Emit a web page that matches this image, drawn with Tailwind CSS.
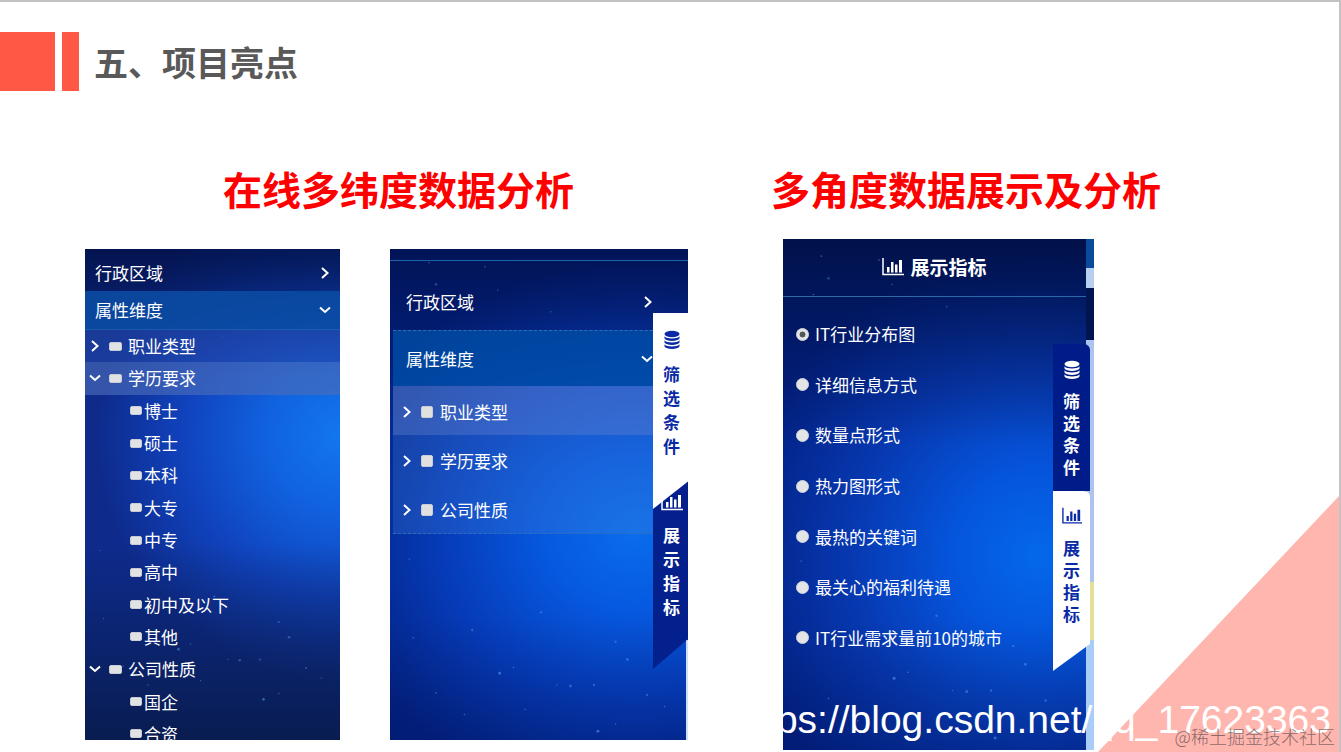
<!DOCTYPE html>
<html lang="zh-CN">

<head>
  <meta charset="UTF-8" />
  <meta name="viewport" content="width=device-width, initial-scale=1" />
  <title>五、项目亮点</title>
  <script src="https://cdn.jsdelivr.net/npm/@tailwindcss/browser@4"></script>
</head>

<body class="bg-white font-['Noto_Sans_CJK_SC',sans-serif]">

  <!-- 公共图标 -->
  <svg class="hidden" aria-hidden="true">
    <symbol id="right" viewBox="0 0 8 12"><path d="M1 1l5.5 5L1 11" fill="none" stroke="currentColor" stroke-width="2" /></symbol>
    <symbol id="down" viewBox="0 0 12 8"><path d="M1 1.5l5 4.5 5-4.5" fill="none" stroke="currentColor" stroke-width="2" /></symbol>
    <symbol id="database" viewBox="0 0 16 20">
      <ellipse cx="8" cy="4" rx="7.5" ry="3.2" fill="currentColor" />
      <path d="M.5 6.2c1.5 3 13.5 3 15 0v2.3c-1.5 3.2-13.5 3.2-15 0zM.5 10.2c1.5 3 13.5 3 15 0v2.3c-1.5 3.2-13.5 3.2-15 0zM.5 14.2c1.5 3 13.5 3 15 0v2.3c-1.5 3.2-13.5 3.2-15 0z" fill="currentColor" />
    </symbol>
    <symbol id="chart" viewBox="0 0 22 18">
      <path d="M1 0v16.5h21" fill="none" stroke="currentColor" stroke-width="1.5" />
      <path d="M5 9h2.500v5.500H5zM9 4h2.500v10.500H9zM13 6.500h2.500v8H13zM17 2h3v12.500h-3z" fill="currentColor" />
    </symbol>
    <symbol id="stars" viewBox="0 0 300 500">
      <g fill="#5fa8f8">
        <circle cx="38" cy="14" r=".8" opacity=".5" /><circle cx="95" cy="18" r=".8" opacity=".5" /><circle cx="45" cy="36" r="1.2" opacity=".4" />
        <circle cx="108" cy="42" r=".8" opacity=".4" /><circle cx="162" cy="64" r=".8" opacity=".4" /><circle cx="30" cy="52" r=".8" opacity=".5" />
        <circle cx="18" cy="316" r=".8" opacity=".4" /><circle cx="152" cy="370" r="1.2" opacity=".4" /><circle cx="82" cy="388" r="1.2" opacity=".4" />
        <circle cx="22" cy="396" r=".8" opacity=".5" /><circle cx="228" cy="400" r="1.2" opacity=".4" /><circle cx="240" cy="418" r="1.5" opacity=".4" />
        <circle cx="110" cy="432" r="1.5" opacity=".5" /><circle cx="124" cy="426" r=".8" opacity=".5" /><circle cx="168" cy="444" r=".8" opacity=".4" />
        <circle cx="182" cy="445" r="1.5" opacity=".4" /><circle cx="206" cy="444" r="1.2" opacity=".4" /><circle cx="260" cy="454" r="1.2" opacity=".4" />
        <circle cx="45" cy="452" r=".8" opacity=".5" /><circle cx="74" cy="474" r=".8" opacity=".5" /><circle cx="136" cy="469" r=".8" opacity=".5" />
        <circle cx="210" cy="491" r="1.5" opacity=".5" /><circle cx="278" cy="466" r=".8" opacity=".5" /><circle cx="228" cy="484" r=".8" opacity=".5" />
      </g>
    </symbol>
  </svg>

  <div class="relative min-h-screen overflow-hidden border-t-2 border-r-2 border-[#c3c3c3]">

    <!-- 右下角装饰 -->
    <div class="absolute right-0 bottom-0 w-[241px] h-[256px] bg-[#ffb6af] [clip-path:polygon(100%_0,100%_100%,0_100%)]"></div>

    <!-- 标题 -->
    <header class="flex items-center pt-[30px]">
      <span class="w-[55px] h-[59px] bg-[#ff5945]"></span>
      <span class="w-[17px] h-[59px] ml-[7px] bg-[#ff5945]"></span>
      <h1 class="ml-[15px] text-[34px] leading-10 font-bold text-[#595959]">五、项目亮点</h1>
    </header>

    <main class="grid grid-cols-[minmax(0,603fr)_minmax(0,311fr)] gap-[95px] pl-[85px] pr-[245px] pt-[73px]">

      <!-- 在线多纬度数据分析 -->
      <section>
        <h2 class="pl-6 text-center text-[39px] leading-12 font-bold text-[#fe0000]">在线多纬度数据分析</h2>
        <div class="mt-[37px] grid grid-cols-[minmax(0,255fr)_minmax(0,298fr)] gap-[50px] text-[17px] leading-6 text-white">

          <!-- 展开的筛选树 -->
          <div class="relative h-[491px] overflow-hidden bg-[linear-gradient(180deg,rgb(0_12_60/0.75),rgb(0_12_60/0.35)_14%,transparent_26%,transparent_60%,rgb(8_26_70/0.85)_100%),radial-gradient(ellipse_95%_50%_at_100%_38%,#1277ee,#1162e0_30%,#1042bc_65%,#0e2b8c_100%)]">
            <svg class="absolute inset-0 size-full" preserveAspectRatio="none"><use href="#stars" /></svg>
            <div class="relative">
              <div class="flex h-[42px] items-center justify-between pt-1.5 pl-2.5 pr-[11px]">
                <span>行政区域</span>
                <svg class="w-2 h-3"><use href="#right" /></svg>
              </div>
              <div class="flex h-[39px] items-center justify-between border-b border-[#1c5cae] bg-[#0a4ea6]/85 pl-2.5 pr-[9px]">
                <span>属性维度</span>
                <svg class="w-3 h-2"><use href="#down" /></svg>
              </div>
              <ul class="flex h-[420px] flex-col">
                <li class="flex flex-1 items-center bg-[#244aae]/60 pl-1">
                  <svg class="w-3 h-3"><use href="#right" /></svg>
                  <label class="flex items-center"><input type="checkbox" class="ml-2 mr-1.5 h-[9px] w-[13px] appearance-none rounded-xs border border-[#c9ccd4] bg-[#e0e2e4]" />职业类型</label>
                </li>
                <li class="flex flex-1 items-center bg-[#4a6cba]/65 pl-1">
                  <svg class="w-3 h-2"><use href="#down" /></svg>
                  <label class="flex items-center"><input type="checkbox" class="ml-2 mr-1.5 h-[9px] w-[13px] appearance-none rounded-xs border border-[#c9ccd4] bg-[#e0e2e4]" />学历要求</label>
                </li>
                <li class="flex flex-1 items-center pl-[45px]"><label class="flex items-center gap-0.5"><input type="checkbox" class="h-[9px] w-3 appearance-none rounded-xs border border-[#c9ccd4] bg-[#e0e2e4]" />博士</label></li>
                <li class="flex flex-1 items-center pl-[45px]"><label class="flex items-center gap-0.5"><input type="checkbox" class="h-[9px] w-3 appearance-none rounded-xs border border-[#c9ccd4] bg-[#e0e2e4]" />硕士</label></li>
                <li class="flex flex-1 items-center pl-[45px]"><label class="flex items-center gap-0.5"><input type="checkbox" class="h-[9px] w-3 appearance-none rounded-xs border border-[#c9ccd4] bg-[#e0e2e4]" />本科</label></li>
                <li class="flex flex-1 items-center pl-[45px]"><label class="flex items-center gap-0.5"><input type="checkbox" class="h-[9px] w-3 appearance-none rounded-xs border border-[#c9ccd4] bg-[#e0e2e4]" />大专</label></li>
                <li class="flex flex-1 items-center pl-[45px]"><label class="flex items-center gap-0.5"><input type="checkbox" class="h-[9px] w-3 appearance-none rounded-xs border border-[#c9ccd4] bg-[#e0e2e4]" />中专</label></li>
                <li class="flex flex-1 items-center pl-[45px]"><label class="flex items-center gap-0.5"><input type="checkbox" class="h-[9px] w-3 appearance-none rounded-xs border border-[#c9ccd4] bg-[#e0e2e4]" />高中</label></li>
                <li class="flex flex-1 items-center pl-[45px]"><label class="flex items-center gap-0.5"><input type="checkbox" class="h-[9px] w-3 appearance-none rounded-xs border border-[#c9ccd4] bg-[#e0e2e4]" />初中及以下</label></li>
                <li class="flex flex-1 items-center pl-[45px]"><label class="flex items-center gap-0.5"><input type="checkbox" class="h-[9px] w-3 appearance-none rounded-xs border border-[#c9ccd4] bg-[#e0e2e4]" />其他</label></li>
                <li class="flex flex-1 items-center pl-1">
                  <svg class="w-3 h-2"><use href="#down" /></svg>
                  <label class="flex items-center"><input type="checkbox" class="ml-2 mr-1.5 h-[9px] w-[13px] appearance-none rounded-xs border border-[#c9ccd4] bg-[#e0e2e4]" />公司性质</label>
                </li>
                <li class="flex flex-1 items-center pl-[45px]"><label class="flex items-center gap-0.5"><input type="checkbox" class="h-[9px] w-3 appearance-none rounded-xs border border-[#c9ccd4] bg-[#e0e2e4]" />国企</label></li>
                <li class="flex flex-1 items-center pl-[45px]"><label class="flex items-center gap-0.5"><input type="checkbox" class="h-[9px] w-3 appearance-none rounded-xs border border-[#c9ccd4] bg-[#e0e2e4]" />合资</label></li>
              </ul>
            </div>
          </div>

          <!-- 筛选条件面板 -->
          <div class="relative h-[491px] overflow-hidden bg-[linear-gradient(180deg,rgb(0_12_60/0.6),transparent_28%,transparent_75%,rgb(0_20_90/0.25)_100%),radial-gradient(ellipse_105%_55%_at_82%_58%,#0a6cec,#0659e0_28%,#063bb8_62%,#03207f_100%)]">
            <svg class="absolute inset-0 size-full" preserveAspectRatio="none"><use href="#stars" /></svg>
            <div class="relative">
              <div class="h-3 border-b border-[#1b62a8]"></div>
              <div class="pl-[3px]">
                <div class="flex h-[69px] items-center justify-between pt-3 pl-[13px] pr-9">
                  <span>行政区域</span>
                  <svg class="w-2 h-3"><use href="#right" /></svg>
                </div>
                <div class="flex h-14 items-center justify-between border-t border-dashed border-[#2d6fb5] bg-[#004ea6]/80 pl-[13px] pr-[35px]">
                  <span>属性维度</span>
                  <svg class="w-3 h-2"><use href="#down" /></svg>
                </div>
                <ul class="border-b border-dashed border-[#2d6fb5] bg-[#4a86d8]/25">
                  <li class="flex h-[49px] items-center bg-[#6a86d0]/35 pt-0.5 pl-2.5">
                    <svg class="w-2 h-3"><use href="#right" /></svg>
                    <label class="flex items-center"><input type="checkbox" class="ml-2.5 mr-[7px] size-3 appearance-none rounded-xs border border-[#c9ccd4] bg-[#e0e0e0]" />职业类型</label>
                  </li>
                  <li class="flex h-[49px] items-center pt-0.5 pl-2.5">
                    <svg class="w-2 h-3"><use href="#right" /></svg>
                    <label class="flex items-center"><input type="checkbox" class="ml-2.5 mr-[7px] size-3 appearance-none rounded-xs border border-[#c9ccd4] bg-[#e0e0e0]" />学历要求</label>
                  </li>
                  <li class="flex h-[49px] items-center pt-0.5 pl-2.5">
                    <svg class="w-2 h-3"><use href="#right" /></svg>
                    <label class="flex items-center"><input type="checkbox" class="ml-2.5 mr-[7px] size-3 appearance-none rounded-xs border border-[#c9ccd4] bg-[#e0e0e0]" />公司性质</label>
                  </li>
                </ul>
              </div>
            </div>
            <div class="absolute right-0 bottom-0 h-[100px] w-0.5 bg-[#cfe0fb]"></div>

            <!-- 侧边标签 -->
            <div class="absolute top-16 right-0 w-[35px] font-bold">
              <button class="relative z-10 flex h-[196px] w-full flex-col items-center bg-white pt-[17px] pl-0.5 text-[#0a2aa5] [clip-path:polygon(0_0,100%_0,100%_86%,0_100%)]">
                <svg class="mb-3 w-4 h-5"><use href="#database" /></svg>
                <span>筛</span><span>选</span><span>条</span><span>件</span>
              </button>
              <button class="-mt-7 flex h-[188px] w-full flex-col items-center bg-[#04208c] pt-3 pl-0.5 text-white [clip-path:polygon(0_0,100%_0,100%_84%,0_100%)]">
                <svg class="mb-3 w-[22px] h-[18px] shrink-0"><use href="#chart" /></svg>
                <span>展</span><span>示</span><span>指</span><span>标</span>
              </button>
            </div>
          </div>
        </div>
      </section>

      <!-- 多角度数据展示及分析 -->
      <section>
        <h2 class="-ml-3 text-[39px] leading-12 font-bold whitespace-nowrap text-[#fe0000]">多角度数据展示及分析</h2>
        <div class="relative mt-[27px] flex h-[511px] text-[17px] leading-6 text-white">
          <div class="relative flex-1 overflow-hidden bg-[linear-gradient(180deg,rgb(0_12_55/0.75),rgb(0_12_55/0.25)_24%,transparent_40%,transparent_75%,rgb(0_20_90/0.3)_100%),radial-gradient(ellipse_100%_60%_at_84%_62%,#0468ea,#0555dc_28%,#0738b0_62%,#022082_100%)]">
            <svg class="absolute inset-0 size-full" preserveAspectRatio="none"><use href="#stars" /></svg>
            <div class="relative">
              <h3 class="flex h-[58px] items-center justify-center gap-1.5 border-b border-[#2a6aa8] pb-0.5 text-[19px] font-bold">
                <svg class="w-[22px] h-[18px]"><use href="#chart" /></svg>展示指标
              </h3>
              <div class="mt-3 flex h-[354px] flex-col pl-[13px]">
                <label class="flex flex-1 items-center gap-1.5"><input type="radio" name="metric" checked class="size-[13px] appearance-none rounded-full border border-[#d0d3da] bg-[#e2e4e6] checked:bg-[radial-gradient(#555_34%,#e2e4e6_42%)]" />IT行业分布图</label>
                <label class="flex flex-1 items-center gap-1.5"><input type="radio" name="metric" class="size-[13px] appearance-none rounded-full border border-[#d0d3da] bg-[#e2e4e6]" />详细信息方式</label>
                <label class="flex flex-1 items-center gap-1.5"><input type="radio" name="metric" class="size-[13px] appearance-none rounded-full border border-[#d0d3da] bg-[#e2e4e6]" />数量点形式</label>
                <label class="flex flex-1 items-center gap-1.5"><input type="radio" name="metric" class="size-[13px] appearance-none rounded-full border border-[#d0d3da] bg-[#e2e4e6]" />热力图形式</label>
                <label class="flex flex-1 items-center gap-1.5"><input type="radio" name="metric" class="size-[13px] appearance-none rounded-full border border-[#d0d3da] bg-[#e2e4e6]" />最热的关键词</label>
                <label class="flex flex-1 items-center gap-1.5"><input type="radio" name="metric" class="size-[13px] appearance-none rounded-full border border-[#d0d3da] bg-[#e2e4e6]" />最关心的福利待遇</label>
                <label class="flex flex-1 items-center gap-1.5"><input type="radio" name="metric" class="size-[13px] appearance-none rounded-full border border-[#d0d3da] bg-[#e2e4e6]" />IT行业需求量前10的城市</label>
              </div>
            </div>
          </div>

          <!-- 露出的地图边缘 -->
          <div class="flex w-2 flex-col">
            <span class="h-[29px] bg-[#0a4a9c]"></span>
            <span class="h-5 bg-[#b9cff2]"></span>
            <span class="h-[52px] bg-[#001550]"></span>
            <span class="h-[242px] bg-[#adc4ee]"></span>
            <span class="h-[58px] bg-[#e8dd96]"></span>
            <span class="flex-1 bg-[#a9cdf8]"></span>
          </div>

          <!-- 侧边标签 -->
          <div class="absolute top-[105px] right-1 w-[37px] leading-[22px] font-bold">
            <button class="flex h-[147px] w-full flex-col items-center rounded-tr-md bg-[#001c88] pt-4 text-white">
              <svg class="mb-2.5 w-4 h-5"><use href="#database" /></svg>
              <span>筛</span><span>选</span><span>条</span><span>件</span>
            </button>
            <button class="flex h-[180px] w-full flex-col items-center rounded-tr-md bg-white pt-4 text-[#0a2aa5] [clip-path:polygon(0_0,100%_0,100%_85%,0_100%)]">
              <svg class="mb-3 w-5 h-[18px]"><use href="#chart" /></svg>
              <span>展</span><span>示</span><span>指</span><span>标</span>
            </button>
          </div>
        </div>
      </section>
    </main>

    <!-- 水印 -->
    <p class="absolute right-2 bottom-2 font-['Liberation_Sans',sans-serif] text-[39px] leading-12 whitespace-nowrap text-white">https://blog.csdn.net/qq_17623363</p>
    <p class="absolute right-1 bottom-1 text-[18px] leading-6 font-light whitespace-nowrap text-[#6b5555]/80">@稀土掘金技术社区</p>
  </div>
</body>

</html>
